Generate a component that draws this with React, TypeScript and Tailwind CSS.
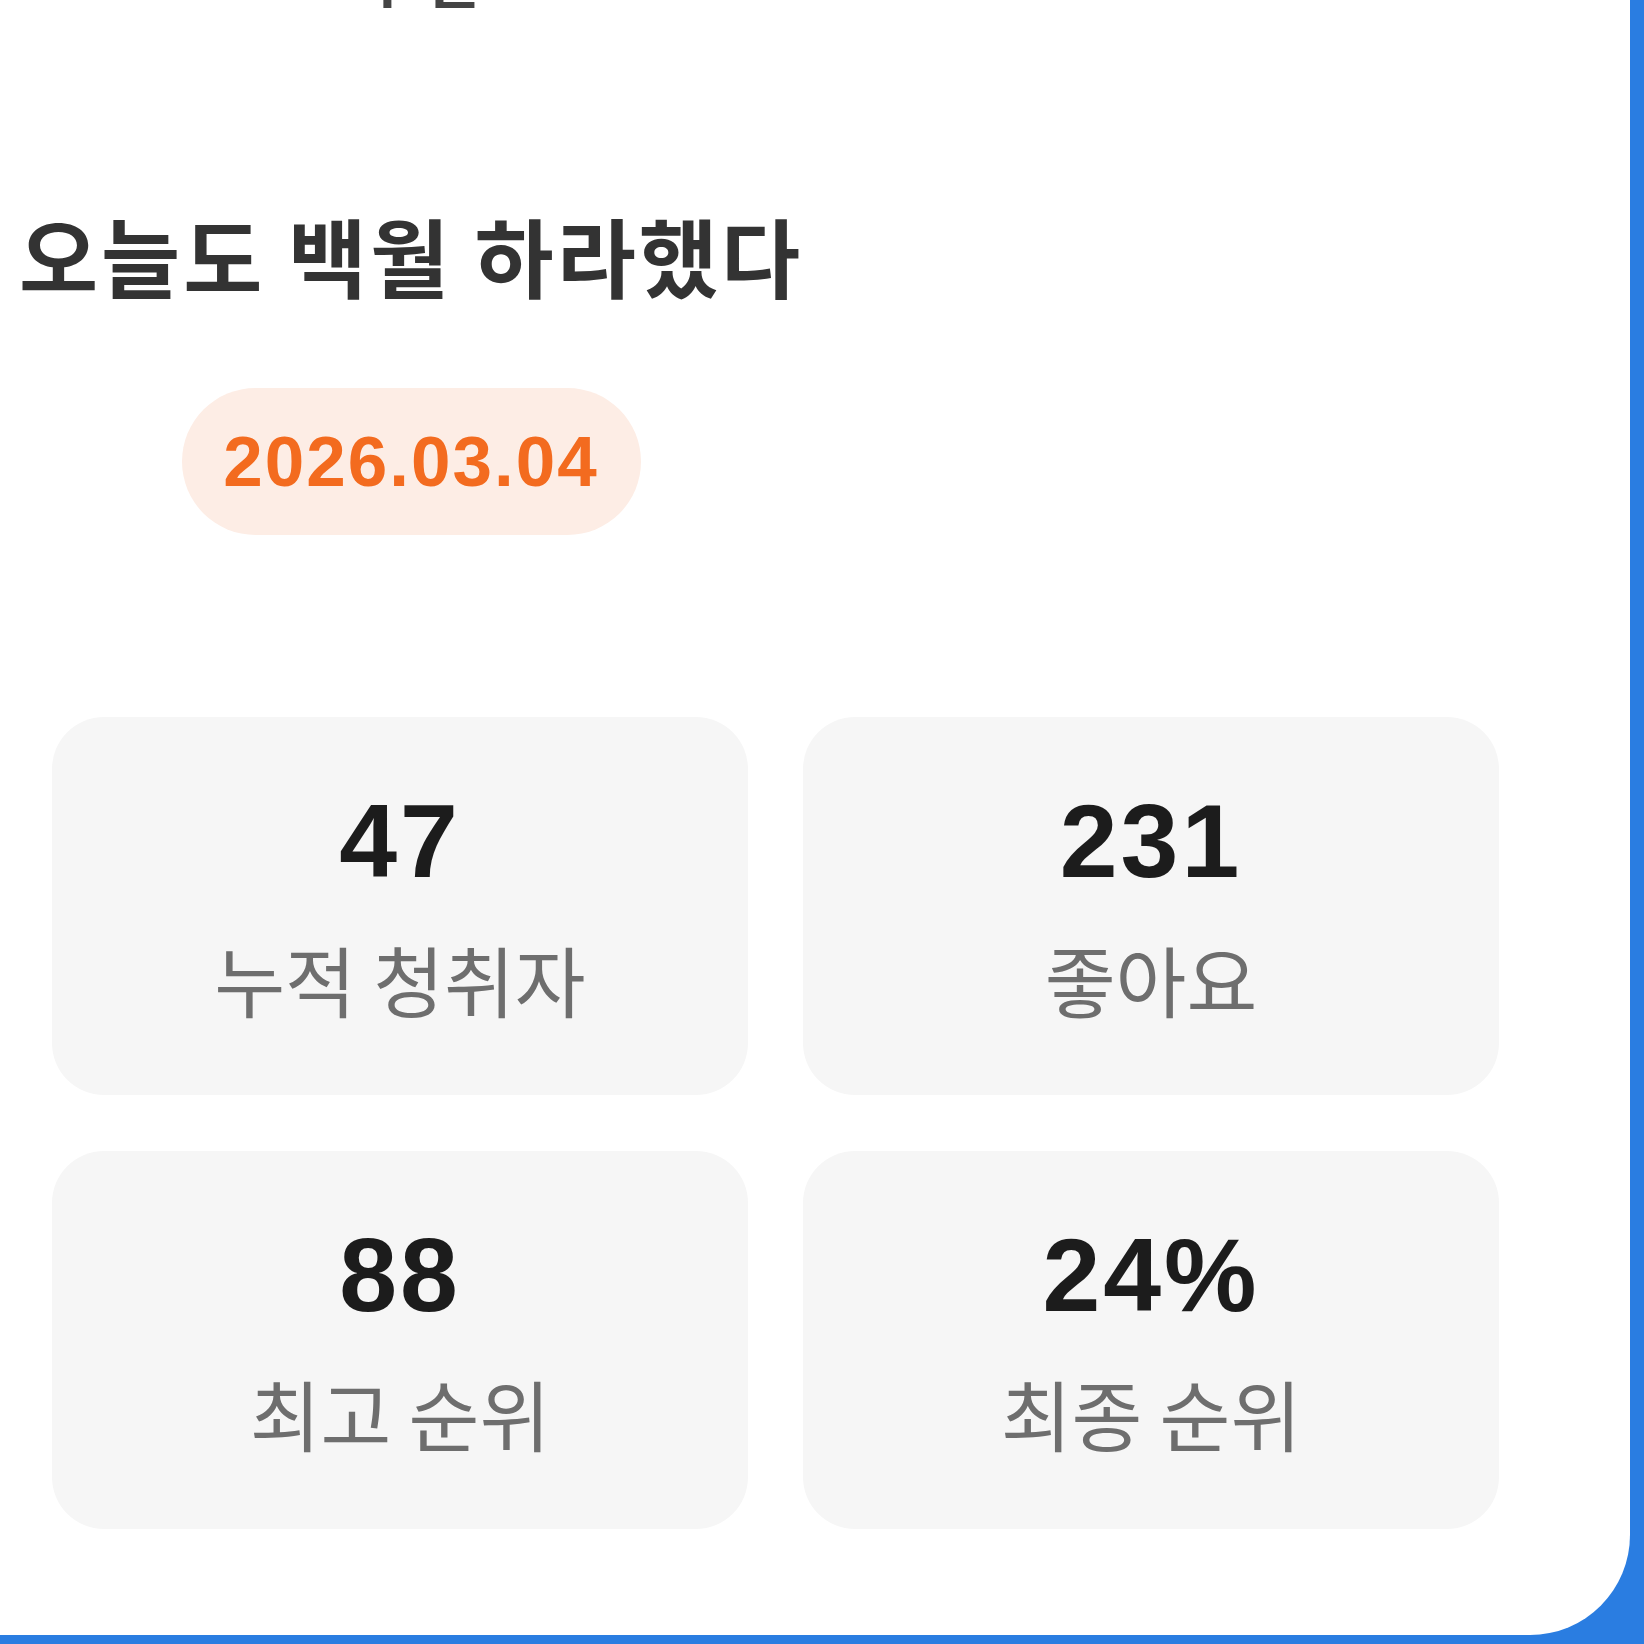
const stats = [
  { value: "47", label: "누적 청취자" },
  { value: "231", label: "좋아요" },
  { value: "88", label: "최고 순위" },
  { value: "24%", label: "최종 순위" },
];

function StatCard({ value, label }: { value: string; label: string }) {
  return (
    <div className="flex h-[378px] flex-col items-center justify-center gap-[47px] rounded-[52px] bg-[#f6f6f6] pb-[7px]">
      <div className="font-['Liberation_Sans',Arial,sans-serif] text-[104px] font-bold leading-none tracking-[3px] text-[#1c1c1c]">
        {value}
      </div>
      <div className="font-['Noto_Sans_CJK_KR',sans-serif] text-[77px] font-normal leading-none text-[#6e6e6e]">
        {label}
      </div>
    </div>
  );
}

export default function App() {
  return (
    <div className="h-[1644px] w-[1644px] bg-[#2a7de1] pb-[9px] pr-[14px]">
      <div className="flex h-full w-full flex-col overflow-hidden rounded-br-[100px] bg-white font-['Noto_Sans_CJK_KR',sans-serif]">
        {/* tail of the line above, cut by the top edge */}
        <div className="flex h-[8px] items-end overflow-hidden pl-[360px]">
          <span className="text-[60px] font-bold leading-none tracking-[12px] text-[#444444]">부분</span>
        </div>

        <div className="mt-[204px] flex w-[822px] flex-col items-center">
          <h1 className="text-[86px] font-bold leading-none tracking-[3px] text-[#333333]">
            오늘도 백월 하라했다
          </h1>
          <div className="mt-[90px] flex h-[147px] w-[459px] items-center justify-center rounded-full bg-[#fdede5]">
            <span className="font-['Liberation_Sans',Arial,sans-serif] text-[71px] font-bold leading-none tracking-[2px] text-[#f36b1f]">
              2026.03.04
            </span>
          </div>
        </div>

        <div className="ml-[52px] mt-[182px] grid w-[1447px] grid-cols-2 gap-x-[55px] gap-y-[56px]">
          {stats.map((s) => (
            <StatCard key={s.label} value={s.value} label={s.label} />
          ))}
        </div>
      </div>
    </div>
  );
}
